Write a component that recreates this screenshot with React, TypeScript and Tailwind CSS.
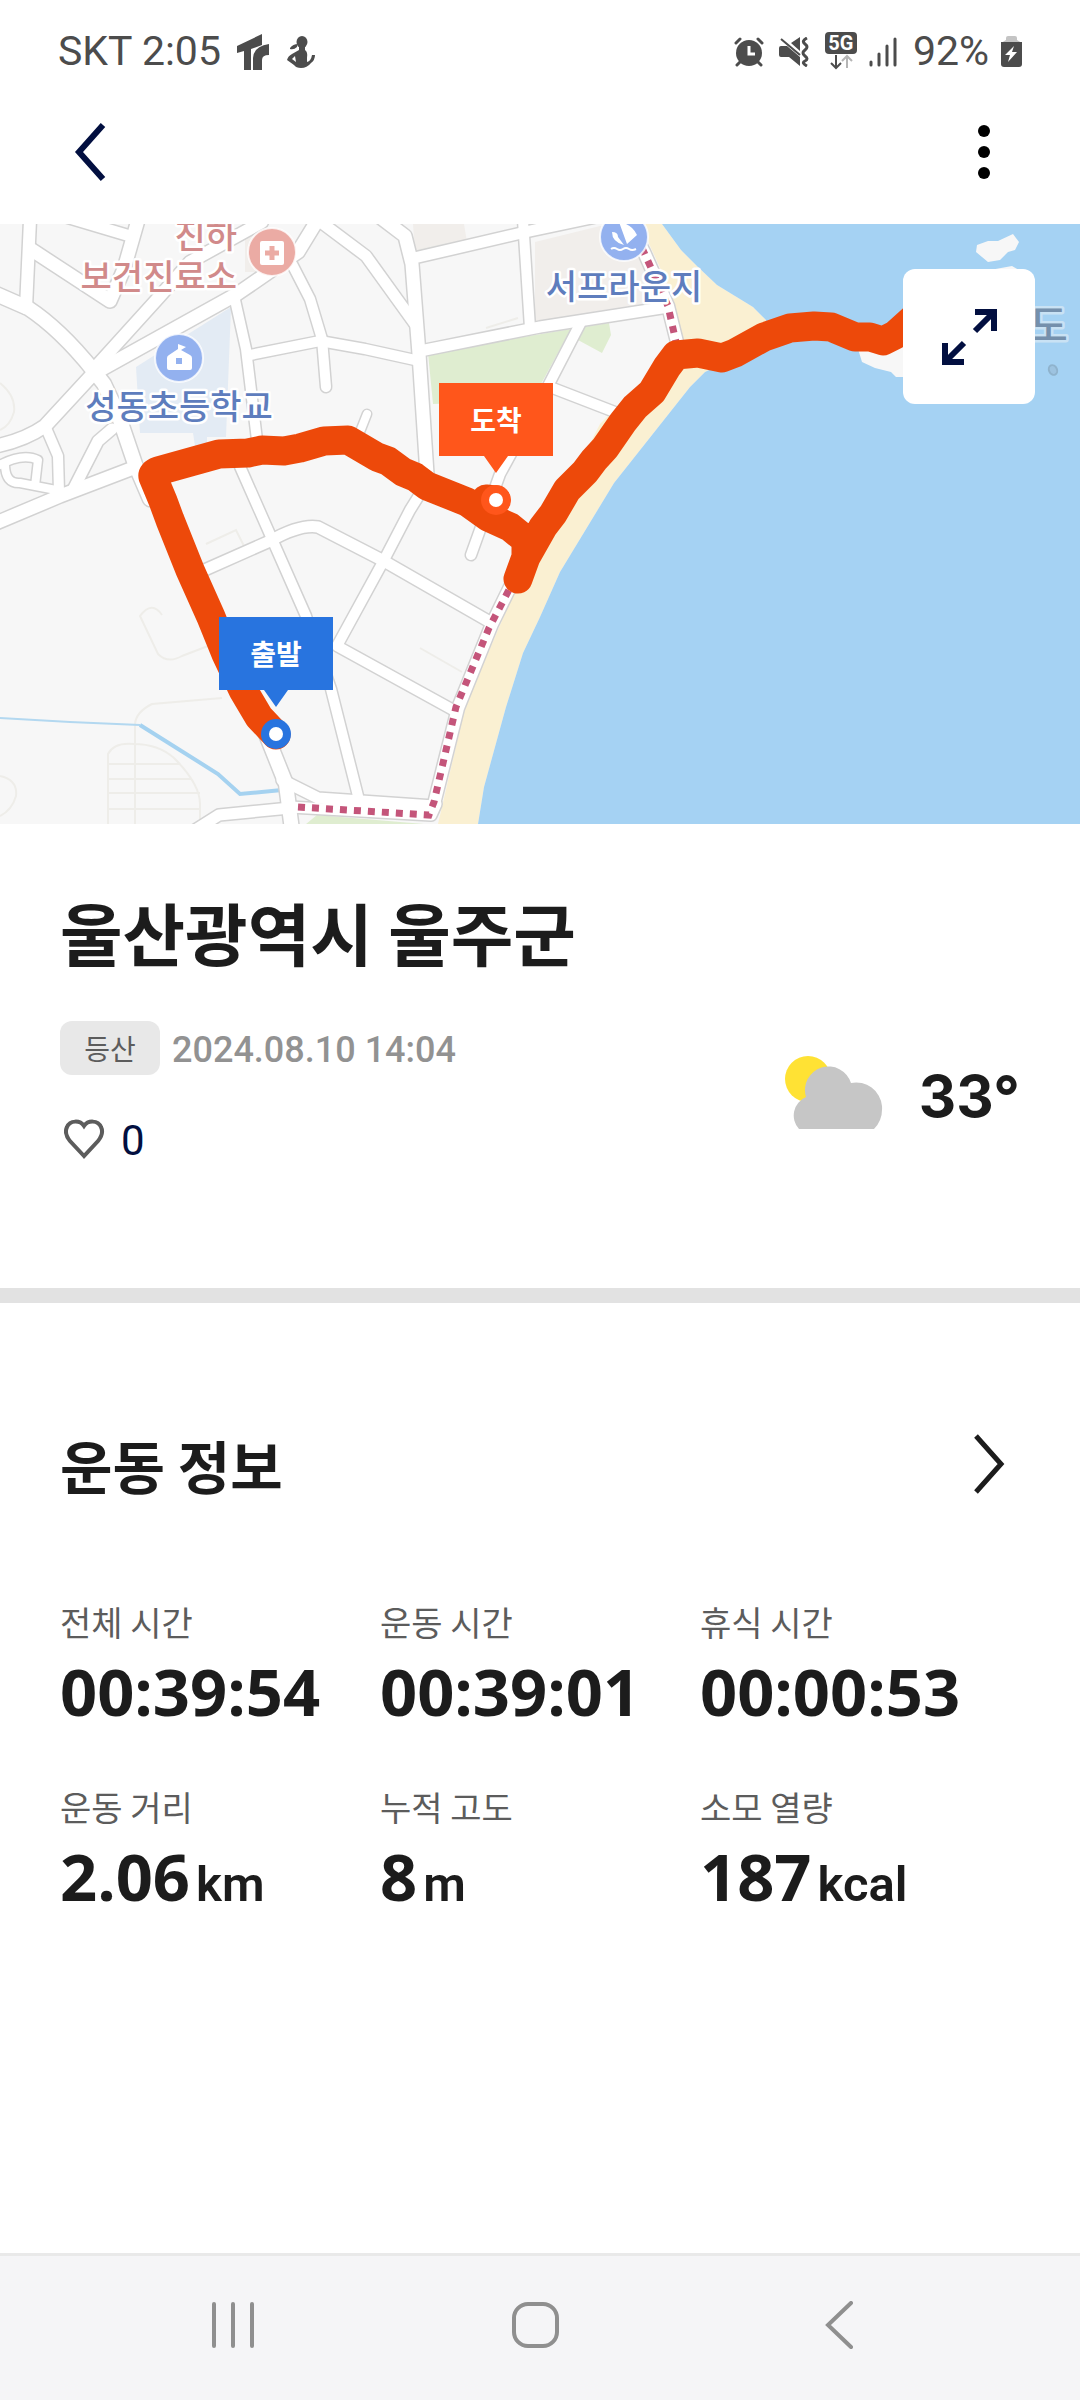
import React from 'react';

const FONT = "font-['Noto_Sans_CJK_KR',sans-serif]";

interface Stat {
  label: string;
  value: string;
  unit?: string;
}

const stats: Stat[] = [
  { label: '전체 시간', value: '00:39:54' },
  { label: '운동 시간', value: '00:39:01' },
  { label: '휴식 시간', value: '00:00:53' },
  { label: '운동 거리', value: '2.06', unit: 'km' },
  { label: '누적 고도', value: '8', unit: 'm' },
  { label: '소모 열량', value: '187', unit: 'kcal' },
];

// Road centre lines with their widths, in map units
const roads: Array<{ d: string; w: number }> = [
  { d: 'M30 -4L26 84', w: 13 },
  { d: 'M56 -10L130 12', w: 12 },
  { d: 'M32 26L110 77L124 45L138 -4', w: 14 },
  { d: 'M-4 70L28 84Q60 105 93 146L104 160L118 190L135 240L150 275', w: 15 },
  { d: 'M93 146L160 72L190 38L262 -2', w: 13 },
  { d: 'M-4 222Q25 216 45 202L93 150L237 70L298 28L320 -8', w: 14 },
  { d: 'M235 76L246 125L257 216', w: 11 },
  { d: 'M238 238L306 392L331 465L358 572', w: 11 },
  { d: 'M292 40L310 75L322 115L326 163', w: 11 },
  { d: 'M250 131L320 117L365 125L415 136', w: 11 },
  { d: 'M318 -4L366 32L415 100', w: 12 },
  { d: 'M376 -10L405 12L412 40L419 130L427 250', w: 14 },
  { d: 'M414 34L530 7L610 -10', w: 12 },
  { d: 'M523 -4L530 104', w: 11 },
  { d: 'M420 127L540 103L668 83', w: 12 },
  { d: 'M-4 299L60 272L136 243', w: 14 },
  { d: 'M59 268L58 232L46 204', w: 11 },
  { d: 'M-4 243Q22 228 38 236L35 262M5 240Q5 260 20 259L56 266', w: 9 },
  { d: 'M74 264L98 217L112 205', w: 12 },
  { d: 'M200 348L270 317Q300 300 318 303L382 336L490 398', w: 12 },
  { d: 'M425 262L410 286L384 336L337 422L455 487', w: 11 },
  { d: 'M580 100L548 162L500 250L471 331', w: 11 },
  { d: 'M367 190L356 218', w: 9 },
  { d: 'M550 163L620 190', w: 11 },
  { d: 'M624 -10L644 28L668 82L677 118', w: 13 },
  { d: 'M514 355L492 400L458 484L433 584', w: 13 },
  { d: 'M258 490L286 560L292 606', w: 15 },
  { d: 'M282 556L318 574L434 582', w: 12 },
  { d: 'M290 583L431 591L436 580', w: 12 },
  { d: 'M192 608L219 591L290 584', w: 12 },
];

const ROUTE =
  'M276 511L259 493L243 466L226 430L211 393L190 346L170 296L163 277L153 253Q152 249 158 247L219 230L248 229L262 226L284 227L300 224L324 217L348 216L377 233L388 237L403 248L415 253L427 262L467 278L488 293L510 303L526 316L526 333L518 355M526 333L543 303L553 290L567 266L585 248L594 236L605 224L623 198L635 183L652 168L667 143L676 131L698 129L722 134L735 129L764 113L790 104L814 102L831 103L855 113L870 113L883 117L895 111L915 93M484 288L486 275L496 276';

const LABEL = "font-['Noto_Sans_CJK_KR',sans-serif] text-[34px] font-medium [paint-order:stroke]";

const MapPin = ({ x, y, label, color }: { x: number; y: number; label: string; color: string }) => (
  <g transform={`translate(${x} ${y})`}>
    <path d="M-57 -117H57V-44H12L0 -27L-12 -44H-57Z" fill={color} />
    <text y="-69" textAnchor="middle" fill="#fff" className="font-['Noto_Sans_CJK_KR',sans-serif] text-[28px] font-bold">
      {label}
    </text>
    <circle r="15" fill={color} />
    <circle r="7" fill="#fff" />
  </g>
);

const RouteMap = () => (
  <svg viewBox="0 0 1080 600" preserveAspectRatio="xMidYMid slice" className="block h-[600px] w-full" role="img" aria-label="이동 경로 지도">
    <rect width="1080" height="600" fill="#f7f7f7" />

    {/* areas */}
    <path d="M413 0H464L467 18L415 30ZM535 18L600 2H640L664 76L535 98ZM245 12H260V48H245Z" fill="#f1eeeb" />
    <path d="M231 83L226 213H207V222H195L193 209H140L136 143Z" fill="#e3ebf4" />
    <path d="M428 129L571 105L541 160L535 176L433 180ZM583 103L609 99L611 111L602 129L578 116ZM306 600L317 591L424 600Z" fill="#dfedd0" />
    <path d="M640 0H662L681 26L698 43L717 61L753 83L766 96V118L705 148L690 163L614 259L560 348L540 393L523 429L506 483L484 563L478 600H438L465 483L485 436L515 366L600 200L681 118L672 70Z" fill="#faf0d2" />
    <path d="M662 0L681 26L698 43L717 61L753 83L766 96V118L705 148L690 163L614 259L560 348L540 393L523 429L506 483L484 563L478 600H1080V0Z" fill="#a5d2f3" />

    {/* fields and footpaths */}
    <g fill="none" stroke="#eeede9" strokeWidth="2">
      <path d="M0 159Q16 172 14 188Q10 202 0 206M0 552Q18 556 16 572Q12 586 0 592" />
      <path d="M162 391Q152 376 140 392L158 430Q168 440 182 432L208 422M206 320L236 306L244 322M222 474L152 480Q136 488 135 500V600M420 424L462 448" />
      <path d="M108 600V530Q114 518 134 520Q158 520 174 534Q200 560 200 580V600M108 540H180M108 555H192M108 569H200M108 585H200" />
      <path d="M418 26L446 20M486 104L518 94" />
    </g>

    <path d="M0 494L70 498L140 501" fill="none" stroke="#b3d8f0" strokeWidth="2" />
    <path d="M140 501L218 550L240 570L282 566" fill="none" stroke="#a5d2f0" strokeWidth="4" />

    {/* roads: casing first, then the surface */}
    <g fill="none" stroke="#d2d2d2" strokeLinecap="round" strokeLinejoin="round">
      {roads.map((road) => (
        <path key={road.d} d={road.d} strokeWidth={road.w + 2} />
      ))}
    </g>
    <g fill="none" stroke="#fff" strokeLinecap="round" strokeLinejoin="round">
      {roads.map((road) => (
        <path key={road.d} d={road.d} strokeWidth={road.w - 1} />
      ))}
    </g>
    <path
      d="M298 583L429 591L434 578L456 483L489 404L512 360M642 24L652 46L668 82L676 118"
      fill="none"
      stroke="#c4557a"
      strokeWidth="7"
      strokeDasharray="7 7"
    />

    {/* islands */}
    <g fill="#f7f7f7">
      <path d="M977 21L988 17H998L1013 10L1019 18L1015 26L1008 28L1000 36L988 38L982 33L976 28Z" />
      <path d="M990 46L1012 42L1022 48L1010 60H990Z" />
      <path d="M858 125L862 138L875 144L891 148L896 153H910V110Z" />
    </g>
    <ellipse cx="1053" cy="146" rx="4" ry="5" fill="#9dc3e0" stroke="#8fb3cd" strokeWidth="2" transform="rotate(-25 1053 146)" />

    {/* places */}
    <g stroke="#fff" strokeOpacity="0.8" strokeWidth="2">
      <circle cx="272" cy="28" r="24" fill="#ebaba4" />
      <circle cx="179" cy="134" r="24" fill="#93b1ef" />
      <circle cx="624" cy="13" r="24" fill="#93b1ef" />
    </g>
    <rect x="260" y="17" width="24" height="24" rx="2" fill="#fff" />
    <path d="M272 22V36M265 29H279" stroke="#ebaba4" strokeWidth="5" />
    <path d="M167 134Q167 132 169 131L178 125V120L186 123L181 126L190 131Q192 132 192 134V144Q192 146 190 146H169Q167 146 167 144ZM176 134V140H182V134Z" fill="#fff" fillRule="evenodd" />
    <path d="M619 -2Q632 0 637 11L627 20ZM612 8Q618 8 618 13L624 21Q612 18 612 8Z" fill="#fff" />
    <path d="M611 25Q614 23 617 25T623 25T629 25T636 25" fill="none" stroke="#fff" strokeWidth="2" />

    <g stroke="#fff" strokeWidth="5" strokeLinejoin="round">
      <text textAnchor="end" fill="#d18a8a" className={LABEL}>
        <tspan x="237" y="24">진하</tspan>
        <tspan x="237" y="65">보건진료소</tspan>
      </text>
      <g fill="#5e7dbd">
        <text x="179" y="195" textAnchor="middle" className={LABEL}>성동초등학교</text>
        <text x="624" y="75" textAnchor="middle" className={LABEL}>서프라운지</text>
      </g>
      <text x="1068" y="117" textAnchor="end" fill="#7590ac" stroke="#c9e2f4" className="font-['Noto_Sans_CJK_KR',sans-serif] text-[42px] font-medium [paint-order:stroke]">
        도
      </text>
    </g>

    <path d={ROUTE} fill="none" stroke="#ed490a" strokeWidth="29" strokeLinecap="round" strokeLinejoin="round" />

    <MapPin x={496} y={276} label="도착" color="#ff561b" />
    <MapPin x={276} y={510} label="출발" color="#2874df" />
  </svg>
);

const StatusBar = () => (
  <div className="flex h-[100px] items-center justify-between px-[58px] pt-[3px] font-[Roboto,sans-serif] text-[41px] leading-none text-[#4c4c4c]">
    <div className="flex items-center">
      <span>SKT 2:05</span>
      <svg width="33" height="36" viewBox="0 0 33 36" fill="currentColor" className="ml-4" aria-hidden="true">
        <path d="M0 12L25 0V11L14 15V36H7V17L0 19Z" />
        <path d="M16 36V24Q17 12 32 10V21Q25 21 25 26V36Z" />
      </svg>
      <svg width="28" height="32" viewBox="0 0 28 32" fill="currentColor" className="ml-[17px]" aria-hidden="true">
        <ellipse cx="15" cy="6" rx="5.5" ry="6" />
        <path d="M3 12Q6 8 11 8L10 11Q7 14 3 13Z" />
        <path d="M12 10H18V14Q21 16 20 22V26Q24 25 25 19H28Q28 24 24 27Q20 32 14 32Q9 32 7 29L0 24Q1 20 5 18L12 14ZM5 23L9 26L8 20Z" fillRule="evenodd" />
      </svg>
    </div>
    <div className="flex items-center">
      <svg width="30" height="30" viewBox="0 0 30 30" aria-hidden="true">
        <circle cx="15" cy="16" r="13" fill="currentColor" />
        <path d="M2 6L6 2M28 6L24 2M6 25L3 28M24 25L27 28" stroke="currentColor" strokeWidth="3" strokeLinecap="round" />
        <path d="M15 9V17H21" fill="none" stroke="#fff" strokeWidth="3" />
      </svg>
      <svg width="30" height="30" viewBox="0 0 30 30" className="ml-[15px]" aria-hidden="true">
        <path d="M2 9H8L21 20V29L10 20H2Q0 20 0 18V11Q0 9 2 9ZM12 6L21 0V14Z" fill="currentColor" />
        <path d="M2 2L21 18" stroke="currentColor" strokeWidth="2" />
        <path d="M28 1Q22 4 26 7T26 13T26 19T26 24T28 29" fill="none" stroke="currentColor" strokeWidth="3" />
      </svg>
      <div className="ml-4 flex h-10 flex-col items-center">
        <span className="flex h-[22px] w-8 items-center justify-center rounded bg-[#4c4c4c] text-[20px] font-bold text-white">5G</span>
        <svg width="24" height="16" viewBox="0 0 24 16" fill="none" strokeWidth="2" aria-hidden="true">
          <path d="M7 1V14M2 9L7 14L12 9" stroke="#4c4c4c" />
          <path d="M18 14V2M13 7L18 2L23 7" stroke="#b5b5b5" />
        </svg>
      </div>
      <svg width="28" height="30" viewBox="0 0 28 30" className="ml-3" aria-hidden="true">
        <path d="M2 25V28M10 17V28M18 9V28M26 2V28" stroke="currentColor" strokeWidth="3" strokeLinecap="round" />
      </svg>
      <span className="ml-4">92%</span>
      <svg width="21" height="32" viewBox="0 0 21 32" className="ml-3" aria-hidden="true">
        <path d="M5 2Q5 0 7 0H14Q16 0 16 2V4L21 7H0L5 4Z" fill="#c4c4c4" />
        <path d="M0 6H21V28Q21 31 18 31H3Q0 31 0 28Z" fill="currentColor" />
        <path d="M13 10L4 19H9L7 26L16 16H11Z" fill="#fff" />
      </svg>
    </div>
  </div>
);

const StatItem = ({ label, value, unit }: Stat) => (
  <div>
    <dt className="text-[34px] leading-[50px] text-[#5c5c5c]">{label}</dt>
    <dd className="flex items-baseline gap-1.5 font-['Open_Sans',sans-serif] text-[65px] leading-[88px] font-bold">
      {value}
      {unit && <span className="font-[Roboto,sans-serif] text-[49px] font-semibold">{unit}</span>}
    </dd>
  </div>
);

const App: React.FC = () => {
  return (
    <div className={`flex min-h-screen flex-col bg-white text-[#1c1c1c] ${FONT}`}>
      <StatusBar />

      <header className="flex h-[124px] items-start justify-between px-[60px] pt-4">
        <button type="button" aria-label="뒤로" className="flex h-[72px] w-[60px] items-center justify-center">
          <svg width="34" height="60" viewBox="0 0 34 60" fill="none" stroke="#020f40" strokeWidth="6" aria-hidden="true">
            <path d="M30 3L6 30L30 57" />
          </svg>
        </button>
        <button type="button" aria-label="더보기" className="flex h-[72px] w-[72px] items-center justify-center">
          <svg width="12" height="56" viewBox="0 0 12 56" aria-hidden="true">
            <circle cx="6" cy="7" r="6" />
            <circle cx="6" cy="28" r="6" />
            <circle cx="6" cy="49" r="6" />
          </svg>
        </button>
      </header>

      <main className="flex-1">
        <div className="relative">
          <RouteMap />
          <button
            type="button"
            aria-label="지도 확대"
            className="absolute top-[45px] right-[45px] flex h-[135px] w-[132px] items-center justify-center rounded-xl bg-white"
          >
            <svg width="55" height="56" viewBox="0 0 55 56" fill="none" stroke="#020f40" strokeWidth="6" aria-hidden="true">
              <path d="M33 3H52V22M52 3L33 22M3 34V53H22M3 53L22 34" />
            </svg>
          </button>
        </div>

        <section className="px-[60px] pt-[58px] pb-[118px]">
          <h1 className="text-[68px] leading-[100px] font-bold">울산광역시 울주군</h1>
          <div className="mt-[39px] flex items-center justify-between">
            <div>
              <div className="flex items-center gap-3">
                <span className="flex h-[54px] w-[100px] items-center justify-center rounded-xl bg-[#e8e8e8] text-[28px] text-[#5c5c5c]">등산</span>
                <time dateTime="2024-08-10T14:04" className="pt-1 font-[Roboto,sans-serif] text-[36px] leading-[48px] font-medium text-[#929292]">
                  2024.08.10 14:04
                </time>
              </div>
              <button type="button" aria-label="좋아요" className="mt-[35px] flex h-[60px] items-center gap-4 pl-1 font-[Roboto,sans-serif] text-[42px] text-[#020f40]">
                <svg width="41" height="43" viewBox="0 0 41 43" fill="none" stroke="#5c5c5c" strokeWidth="4" aria-hidden="true">
                  <path d="M20 37L6 22C2 17 1 12 3 8C6 1 16 1 20 7C24 1 34 1 37 8C39 12 38 17 34 22Z" />
                </svg>
                0
              </button>
            </div>
            <div className="flex items-center gap-9">
              <svg width="98" height="74" viewBox="0 0 98 74" className="mb-1.5" aria-hidden="true">
                <circle cx="23" cy="23" r="23" fill="#ffe234" />
                <path d="M14 73A20 20 0 0 1 21 41A23 23 0 0 1 66 27A26 26 0 0 1 97 50Q98 64 89 73Z" fill="#c6c6c6" />
              </svg>
              <span className="font-[Inter,sans-serif] text-[58px] leading-none font-bold">33°</span>
            </div>
          </div>
        </section>

        <div className="h-[15px] bg-[#e2e2e2]" />

        <section className="px-[60px] pt-[121px] pb-[100px]">
          <div className="flex items-center justify-between">
            <h2 className="text-[57px] leading-[80px] font-bold">운동 정보</h2>
            <button type="button" aria-label="운동 정보 상세" className="flex h-20 w-[60px] items-center justify-center">
              <svg width="34" height="60" viewBox="0 0 34 60" fill="none" stroke="#1c1c1c" strokeWidth="5" aria-hidden="true">
                <path d="M3 2L28 30L3 58" />
              </svg>
            </button>
          </div>
          <dl className="mt-[93px] grid grid-cols-3 gap-y-[47px]">
            {stats.map((stat) => (
              <StatItem key={stat.label} {...stat} />
            ))}
          </dl>
        </section>
      </main>

      <nav className="grid h-[147px] grid-cols-3 items-center justify-items-center border-t-[3px] border-[#e9e9e9] bg-[#f5f5f7] pr-[91px] pb-1.5 pl-[82px] text-[#8f8f8f]">
        <button type="button" aria-label="최근 앱">
          <svg width="48" height="48" viewBox="0 0 48 48" fill="none" stroke="currentColor" strokeWidth="4" strokeLinecap="round">
            <path d="M5 3V45M24 3V45M43 3V45" />
          </svg>
        </button>
        <button type="button" aria-label="홈">
          <svg width="48" height="48" viewBox="0 0 48 48" fill="none" stroke="currentColor" strokeWidth="4">
            <rect x="3" y="3" width="43" height="42" rx="14" />
          </svg>
        </button>
        <button type="button" aria-label="이전">
          <svg width="48" height="48" viewBox="0 0 48 48" fill="none" stroke="currentColor" strokeWidth="4" strokeLinecap="round">
            <path d="M37 2L14 24L37 46" />
          </svg>
        </button>
      </nav>
    </div>
  );
};

export default App;
